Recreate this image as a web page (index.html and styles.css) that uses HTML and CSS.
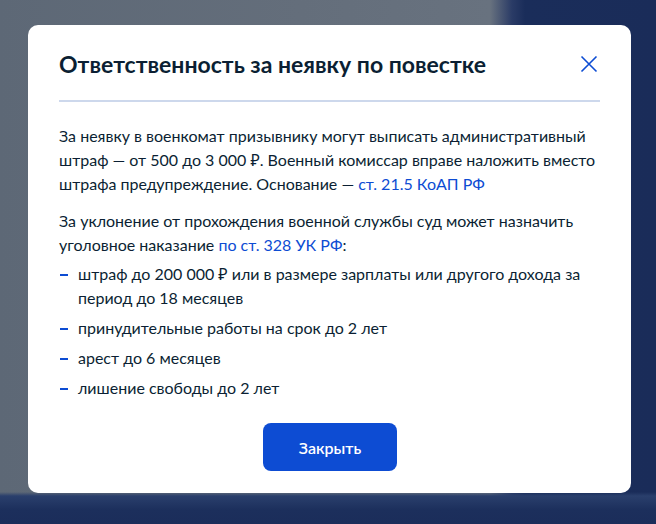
FILE: index.html
```html
<!DOCTYPE html>
<html lang="ru">
<head>
<meta charset="utf-8">
<link rel="stylesheet" href="styles.css">
</head>
<body>
<div class="backdrop">
  <div class="modal">
    <div class="modal-head">
      <h2 class="title">Ответственность за неявку по повестке</h2>
      <button class="close" aria-label="Закрыть">
        <svg width="18" height="18" viewBox="0 0 18 18"><path d="M1.5 1.5L16.5 16.5M16.5 1.5L1.5 16.5" stroke="#0d4cd3" stroke-width="1.6" fill="none"/></svg>
      </button>
    </div>
    <div class="divider"></div>
    <p class="text">За неявку в военкомат призывнику могут выписать административный штраф — от 500 до 3 000 ₽. Военный комиссар вправе наложить вместо штрафа предупреждение. Основание — <a class="link">ст. 21.5 КоАП РФ</a></p>
    <p class="text text-lead">За уклонение от прохождения военной службы суд может назначить уголовное наказание <a class="link">по ст. 328 УК РФ</a>:</p>
    <ul class="list">
      <li>штраф до 200 000 ₽ или в размере зарплаты или другого дохода за период до 18 месяцев</li>
      <li>принудительные работы на срок до 2 лет</li>
      <li>арест до 6 месяцев</li>
      <li>лишение свободы до 2 лет</li>
    </ul>
    <div class="actions">
      <button class="btn">Закрыть</button>
    </div>
  </div>
</div>
</body>
</html>
```
FILE: styles.css
```css
html, body {
  margin: 0;
  padding: 0;
}
body {
  width: 656px;
  height: 524px;
  overflow: hidden;
  font-family: Lato, "Noto Sans", sans-serif;
  background:
    linear-gradient(to bottom, rgba(27,45,90,0) 0, rgba(27,45,90,0) 492px, #2a3f6c 496px, #1c2f5c 510px, #1b2d5a 524px),
    linear-gradient(to right, #5d6876 0, #646e7b 300px, #68727f 490px, #2a3b66 512px, #1a2d5a 525px, #1a2c59 656px);
}
.backdrop {
  padding: 25px 25px 0 28px;
}
.modal {
  width: 603px;
  height: 468px;
  box-sizing: border-box;
  background: #fff;
  border-radius: 10px;
  padding: 25px 31px 0 31px;
  color: #0b1f33;
}
.modal-head {
  display: flex;
  justify-content: space-between;
  align-items: center;
  height: 28px;
}
.title {
  margin: 0;
  font-size: 23px;
  line-height: 28px;
  font-weight: 700;
  color: #0b1f33;
}
.close {
  border: 0;
  background: none;
  padding: 0;
  margin-right: 2px;
  width: 18px;
  height: 18px;
  display: flex;
}
.divider {
  height: 2px;
  background: #cdd8ec;
  margin-top: 22px;
  margin-bottom: 22px;
}
.text {
  margin: 0 0 13px 0;
  font-size: 16px;
  line-height: 24px;
}
.text-lead {
  margin-bottom: 5px;
}
.link {
  color: #0d4cd3;
  text-decoration: none;
}
.list {
  list-style: none;
  margin: 0;
  padding: 0;
}
.list li {
  position: relative;
  padding-left: 19px;
  font-size: 16px;
  line-height: 24px;
  margin-top: 6px;
}
.list li:first-child {
  margin-top: 0;
}
.list li::before {
  content: "";
  position: absolute;
  left: 1px;
  top: 12px;
  width: 8px;
  height: 2px;
  background: #0d4cd3;
}
.actions {
  display: flex;
  justify-content: center;
  margin-top: 23px;
}
.btn {
  width: 134px;
  height: 48px;
  border: 0;
  border-radius: 8px;
  background: #0d4cd3;
  color: #fff;
  font-family: Lato, "Noto Sans", sans-serif;
  font-size: 16px;
  font-weight: 600;
  margin-left: 1px;
}
```
